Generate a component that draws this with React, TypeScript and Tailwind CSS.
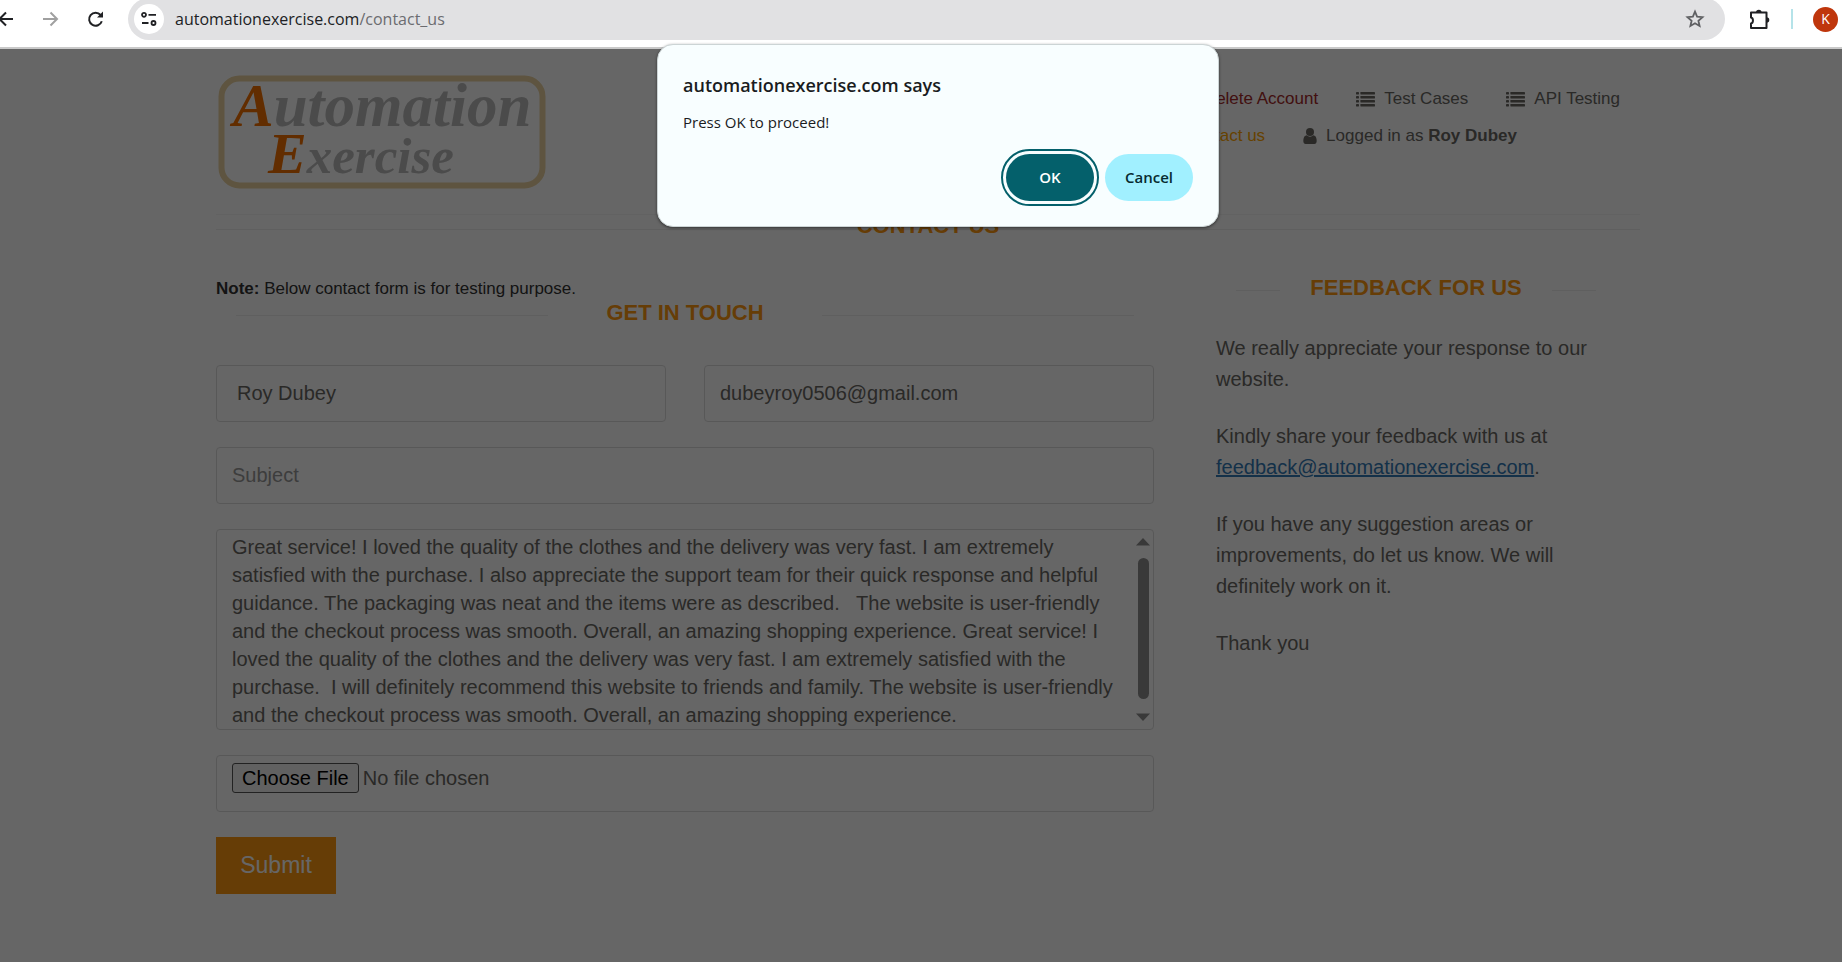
import React from "react";

const REVIEW =
  "Great service! I loved the quality of the clothes and the delivery was very fast. I am extremely satisfied with the purchase. I also appreciate the support team for their quick response and helpful guidance. The packaging was neat and the items were as described.   The website is user-friendly and the checkout process was smooth. Overall, an amazing shopping experience. Great service! I loved the quality of the clothes and the delivery was very fast. I am extremely satisfied with the purchase.  I will definitely recommend this website to friends and family. The website is user-friendly and the checkout process was smooth. Overall, an amazing shopping experience.";

const FIELD =
  "h-[57px] w-full rounded border border-[#ddd] bg-white text-xl text-[#696763] outline-none placeholder:text-[#999]";

function ListIcon() {
  return (
    <svg width="19" height="15" viewBox="0 0 19 15" fill="currentColor" aria-hidden="true">
      {[0, 4, 8, 12].map((y) => (
        <g key={y}>
          <rect x="0" y={y} width="3" height="2.4" rx="0.4" />
          <rect x="4.4" y={y} width="14.6" height="2.4" rx="0.4" />
        </g>
      ))}
    </svg>
  );
}

function UserIcon() {
  return (
    <svg width="14" height="16" viewBox="0 128 1280 1536" fill="currentColor" aria-hidden="true">
      <circle cx="640" cy="512" r="384" />
      <path d="M1280 1399q0 109-62.500 187t-150.500 78h-854q-88 0-150.500-78t-62.500-187q0-85 8.500-160.500t31.500-152t58.500-131t94-89t134.500-34.500q131 128 313 128t313-128q76 0 134.500 34.500t94 89t58.500 131t31.500 152t8.500 160.500z" />
    </svg>
  );
}

function BrowserBar() {
  return (
    <header className="flex h-[49px] shrink-0 items-start overflow-hidden border-b-2 border-[#c9c9c9] bg-white font-['Open_Sans',sans-serif]">
      <div className="flex h-[38px] w-32 shrink-0 items-center text-[#202124]">
        <button type="button" aria-label="Back" className="h-5 w-4">
          <svg width="16" height="20" viewBox="0 0 16 20" fill="none" stroke="currentColor" strokeWidth="2">
            <path d="M13 10H-1M6 3.500L-.5 10 6 16.500" />
          </svg>
        </button>
        <button type="button" aria-label="Forward" className="ml-[26px] text-[#a0a0a0]">
          <svg width="18" height="20" viewBox="0 0 18 20" fill="none" stroke="currentColor" strokeWidth="2">
            <path d="M1 10h14M8.500 3.500L15 10l-6.500 6.500" />
          </svg>
        </button>
        <button type="button" aria-label="Reload" className="ml-[26px]">
          <svg width="20" height="20" viewBox="0 0 20 20" fill="none" stroke="currentColor" strokeWidth="2">
            <path d="M15.800 12.200A6.500 6.500 0 1 1 14.600 6l.8 1" />
            <path d="M17 2.500v6h-6z" fill="currentColor" stroke="none" />
          </svg>
        </button>
      </div>
      <div className="-mt-0.5 flex h-[42px] flex-1 items-center rounded-full bg-[#e1e1e3] pl-[6px] pr-4">
        <button
          type="button"
          aria-label="View site information"
          className="flex size-[30px] items-center justify-center rounded-full bg-white text-[#202124]"
        >
          <svg width="18" height="18" viewBox="0 0 18 18" fill="none" stroke="currentColor" strokeWidth="1.800">
            <circle cx="4" cy="4.800" r="2" />
            <path d="M8.500 4.800H16M2 13h6.500" />
            <circle cx="13.500" cy="13" r="2" />
          </svg>
        </button>
        <div className="ml-[11px] flex flex-1 items-center text-base">
          <span className="text-[#202124]">automationexercise.com</span>
          <span className="text-[#6b6c70]">/contact_us</span>
        </div>
        <button type="button" aria-label="Bookmark this page" className="mr-1 text-[#5f6063]">
          <svg width="20" height="20" viewBox="0 0 20 20" fill="none" stroke="currentColor" strokeWidth="1.800">
            <path d="M10 2.600l2.100 5 5.400.5-4.100 3.600 1.200 5.300-4.600-2.800-4.600 2.800 1.200-5.300-4.100-3.600 5.400-.5z" />
          </svg>
        </button>
      </div>
      <div className="flex h-[38px] w-[117px] shrink-0 items-center pl-6">
        <button type="button" aria-label="Extensions" className="text-[#202124]">
          <svg width="22" height="22" viewBox="0 0 22 22" fill="none" stroke="currentColor" strokeWidth="2">
            <path d="M2 4.500h15.500v15.500H2v-4.500c2.600-.5 2.600-5.500 0-6z" strokeLinejoin="round" />
            <path d="M7 4.500a2.800 2.800 0 0 1 5.600 0zM17.500 9.200a2.800 2.800 0 0 1 0 5.600z" fill="currentColor" stroke="none" />
          </svg>
        </button>
        <span className="ml-[20px] h-5 w-[2px] bg-[#b5e3e9]" />
        <button
          type="button"
          aria-label="Profile"
          className="ml-5 flex size-[25px] shrink-0 items-center justify-center rounded-full bg-[#bf360c] text-sm text-white"
        >
          K
        </button>
      </div>
    </header>
  );
}

function Logo() {
  return (
    <svg width="328" height="114" viewBox="0 0 328 114" role="img" aria-label="Automation Exercise">
      <rect x="3.500" y="3.500" width="321" height="107" rx="18" fill="none" stroke="#ead2a0" strokeWidth="6" />
      <g fontFamily="'Liberation Serif', serif" fontStyle="italic" fontWeight="bold" fill="#bcbcbc">
        <text x="15" y="51" fontSize="61">
          <tspan fill="#f57200">A</tspan>utomation
        </text>
        <text x="50" y="98" fontSize="51">
          <tspan fill="#f57200" fontSize="58">
            E
          </tspan>
          xercise
        </text>
      </g>
    </svg>
  );
}

function SectionTitle({ children, className }: { children: React.ReactNode; className: string }) {
  return (
    <h2 className={`flex items-center text-[22px] leading-6 font-bold text-[#fe980f] ${className}`}>
      <span className="mt-1 h-px flex-1 bg-[#eee]" />
      {children}
      <span className="mt-1 h-px flex-1 bg-[#eee]" />
    </h2>
  );
}

function ConfirmDialog() {
  return (
    <div className="absolute inset-x-0 top-11 flex justify-center pl-[34px]">
      <div
        role="dialog"
        aria-labelledby="dialog-title"
        className="w-[562px] rounded-2xl border border-[#ccd4d5] bg-[#f8feff] px-[25px] pt-6 pb-[25px] font-['Open_Sans',sans-serif] text-[#1a1c1e] shadow-[0_1px_3px_rgba(0,0,0,0.5)]"
      >
        <h1 id="dialog-title" className="text-lg leading-8 font-semibold">
          automationexercise.com says
        </h1>
        <p className="mt-[7px] text-[15px] leading-7">Press OK to proceed!</p>
        <div className="mt-[18px] flex justify-end gap-[11px] text-[15px] font-semibold">
          <button
            type="button"
            className="h-[47px] w-[88px] rounded-full bg-[#04606b] text-white outline-2 outline-offset-3 outline-[#04606b]"
          >
            OK
          </button>
          <button type="button" className="h-[47px] w-[88px] rounded-full bg-[#a1f0ff] text-[#072b30]">
            Cancel
          </button>
        </div>
      </div>
    </div>
  );
}

export default function App() {
  return (
    <div className="relative flex min-h-screen flex-col bg-white">
      <BrowserBar />
      <main className="relative flex-1 pl-[14px] font-['Liberation_Sans',Arial,sans-serif] text-[#696763]">
        <div className="mx-auto w-full max-w-[1424px]">
          <div className="flex h-[165px] items-start justify-between pt-[26px]">
            <a href="#home" className="ml-[2px]">
              <Logo />
            </a>
            <nav className="pt-2 text-[17px] leading-8">
              <ul className="flex justify-end gap-[38px] pr-5">
                <li>
                  <a href="#delete" className="text-[#a52a2a]">
                    Delete Account
                  </a>
                </li>
                <li>
                  <a href="#cases" className="flex items-center gap-[9px]">
                    <ListIcon />
                    Test Cases
                  </a>
                </li>
                <li>
                  <a href="#api" className="flex items-center gap-[9px]">
                    <ListIcon />
                    API Testing
                  </a>
                </li>
              </ul>
              <ul className="mt-[5px] flex justify-end gap-[38px] pr-[123px]">
                <li>
                  <a href="#contact" className="text-[#ffa500]">
                    Contact us
                  </a>
                </li>
                <li className="flex items-center gap-[9px]">
                  <UserIcon />
                  <span>
                    Logged in as <b>Roy Dubey</b>
                  </span>
                </li>
              </ul>
            </nav>
          </div>
          <div className="h-4 border-y border-t-[#f5f5f5] border-b-[#eee]" />
          <h2 className="-mt-4 text-center text-[22px] leading-6 font-bold text-[#fe980f]">CONTACT US</h2>

          <div className="mt-[31px] flex gap-[62px]">
            <section className="w-[938px] shrink-0">
              <p className="mt-2 text-[17px] leading-6 text-[#333]">
                <b>Note:</b> Below contact form is for testing purpose.
              </p>
              <SectionTitle className="gap-[58px] px-5">GET IN TOUCH</SectionTitle>
              <form className="mt-10 flex flex-col gap-[25px]" onSubmit={(e) => e.preventDefault()}>
                <div className="grid grid-cols-2 gap-[38px]">
                  <input aria-label="Name" defaultValue="Roy Dubey" className={`${FIELD} px-5`} />
                  <input
                    aria-label="Email"
                    type="email"
                    defaultValue="dubeyroy0506@gmail.com"
                    className={`${FIELD} px-[15px]`}
                  />
                </div>
                <input aria-label="Subject" placeholder="Subject" className={`${FIELD} px-[15px]`} />
                <div className="flex h-[201px] items-center overflow-hidden rounded border border-[#ddd]">
                  <textarea
                    aria-label="Your message"
                    rows={7}
                    defaultValue={REVIEW}
                    className="flex-1 shrink-0 resize-none overflow-hidden px-[15px] pt-[3px] text-xl leading-7 outline-none"
                  />
                  <div className="flex h-full w-5 flex-col items-center justify-between py-2 text-[#8f8f8f]">
                    <svg width="14" height="8" viewBox="0 0 14 8" fill="currentColor" aria-hidden="true">
                      <path d="M0 7.500L7 0l7 7.500z" />
                    </svg>
                    <span className="mb-[14px] mt-3 w-[11px] flex-1 rounded-full bg-[#8f8f8f]" />
                    <svg width="14" height="8" viewBox="0 0 14 8" fill="currentColor" aria-hidden="true">
                      <path d="M0 .5L7 8l7-7.500z" />
                    </svg>
                  </div>
                </div>
                <input
                  aria-label="Upload file"
                  type="file"
                  className="h-[57px] w-full rounded border border-[#ddd] px-[15px] pt-[7px] text-xl file:mr-1 file:h-[30px] file:rounded-[3px] file:border file:border-solid file:border-[#555] file:bg-[#f2f2f2] file:px-[9px] file:py-0 file:text-black"
                />
                <button type="submit" className="h-[57px] w-[120px] bg-[#fe980f] text-[23px] text-white">
                  Submit
                </button>
              </form>
            </section>
            <aside className="w-[400px]">
              <SectionTitle className="mt-[7px] gap-[30px] px-5">FEEDBACK FOR US</SectionTitle>
              <div className="mt-[33px] flex flex-col gap-[26px] text-xl leading-[31px]">
                <p>We really appreciate your response to our website.</p>
                <p>
                  Kindly share your feedback with us at{" "}
                  <a href="mailto:feedback@automationexercise.com" className="text-[#337ab7] underline">
                    feedback@automationexercise.com
                  </a>
                  .
                </p>
                <p>If you have any suggestion areas or improvements, do let us know. We will definitely work on it.</p>
                <p>Thank you</p>
              </div>
            </aside>
          </div>
        </div>
        <div className="absolute inset-0 bg-black/60" />
      </main>
      <ConfirmDialog />
    </div>
  );
}
